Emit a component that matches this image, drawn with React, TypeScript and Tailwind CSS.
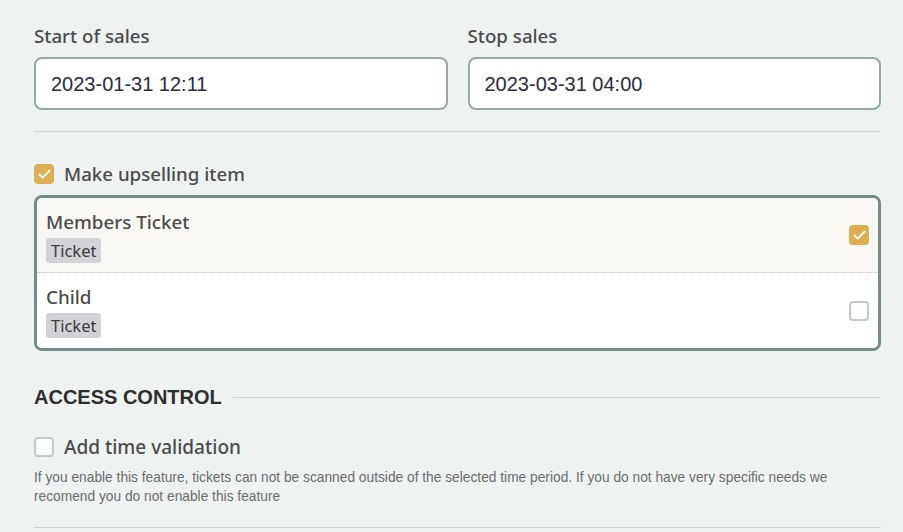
import { Check } from 'lucide-react'

const sans = { fontFamily: '"Noto Sans", "Open Sans", sans-serif' }

function Box({ checked }: { checked: boolean }) {
  return checked ? (
    <span className="flex h-[20px] w-[20px] shrink-0 items-center justify-center rounded-[4px] bg-[#ddae52]">
      <Check className="h-[15px] w-[15px] text-white" strokeWidth={3} />
    </span>
  ) : (
    <span className="h-[20px] w-[20px] shrink-0 rounded-[4px] border-2 border-[#c0cbcb] bg-white" />
  )
}

type Item = { name: string; tag: string; picked: boolean }

const items: Item[] = [
  { name: 'Members Ticket', tag: 'Ticket', picked: true },
  { name: 'Child', tag: 'Ticket', picked: false },
]

export default function App() {
  return (
    <div className="min-h-[532px] bg-[#eef3f1] pl-[34px] pr-[22px] pt-[24px]">
      <div className="grid grid-cols-2 gap-[20px]">
        {[
          ['Start of sales', '2023-01-31 12:11'],
          ['Stop sales', '2023-03-31 04:00'],
        ].map(([label, value]) => (
          <div key={label}>
            <div className="mb-[9px] text-[18.7px] font-medium leading-[24px] text-[#4b4b4b]" style={sans}>
              {label}
            </div>
            <div className="flex h-[53px] items-center rounded-[8px] border-2 border-[#94a8a5] bg-white px-[15px] font-['Liberation_Sans',Arial,sans-serif] text-[20px] text-[#2b2b3b]">
              {value}
            </div>
          </div>
        ))}
      </div>

      <div className="mt-[21px] border-t border-[#d3d7cd]" />

      <div className="mt-[30px] flex items-center gap-[10px]">
        <Box checked />
        <span className="text-[18.7px] font-medium leading-[24px] text-[#4b4b4b]" style={sans}>
          Make upselling item
        </span>
      </div>

      <div className="mt-[9px] overflow-hidden rounded-[8px] border-[3px] border-[#768c88] bg-white">
        {items.map((it, i) => (
          <div
            key={it.name}
            className={
              'flex h-[75px] items-center justify-between pl-[9px] pr-[9px] ' +
              (it.picked ? 'bg-[#f8f7f3] ' : 'bg-white ') +
              (i === 0 ? 'border-b border-dotted border-[#c9c6b6]' : '')
            }
          >
            <div className="pt-[2px]">
              <div className="text-[18.8px] font-medium leading-[24px] text-[#4b4b4b]" style={sans}>
                {it.name}
              </div>
              <span
                className="mt-[4px] inline-block rounded-[3px] bg-[#d2d3d7] px-[5px] text-[16.5px] leading-[25px] text-[#3a3a3a]"
                style={sans}
              >
                {it.tag}
              </span>
            </div>
            <Box checked={it.picked} />
          </div>
        ))}
      </div>

      <div className="mt-[34px] flex items-center gap-[11px]">
        <span className="font-['Liberation_Sans',Arial,sans-serif] text-[20px] font-bold leading-[24px] text-[#2e2e2e]">
          ACCESS CONTROL
        </span>
        <div className="flex-1 border-t border-[#d3d4c6]" />
      </div>

      <div className="mt-[26px] flex items-center gap-[10px]">
        <Box checked={false} />
        <span className="text-[19px] font-medium leading-[24px] text-[#4b4b4b]" style={sans}>
          Add time validation
        </span>
      </div>

      <p className="mt-[9px] font-['Liberation_Sans',Arial,sans-serif] text-[13.75px] leading-[19px] text-[#6c6c6c]">
        If you enable this feature, tickets can not be scanned outside of the selected time period. If you do not have
        very specific needs we recomend you do not enable this feature
      </p>

      <div className="mt-[21px] border-t border-[#d3d7cd]" />
    </div>
  )
}
